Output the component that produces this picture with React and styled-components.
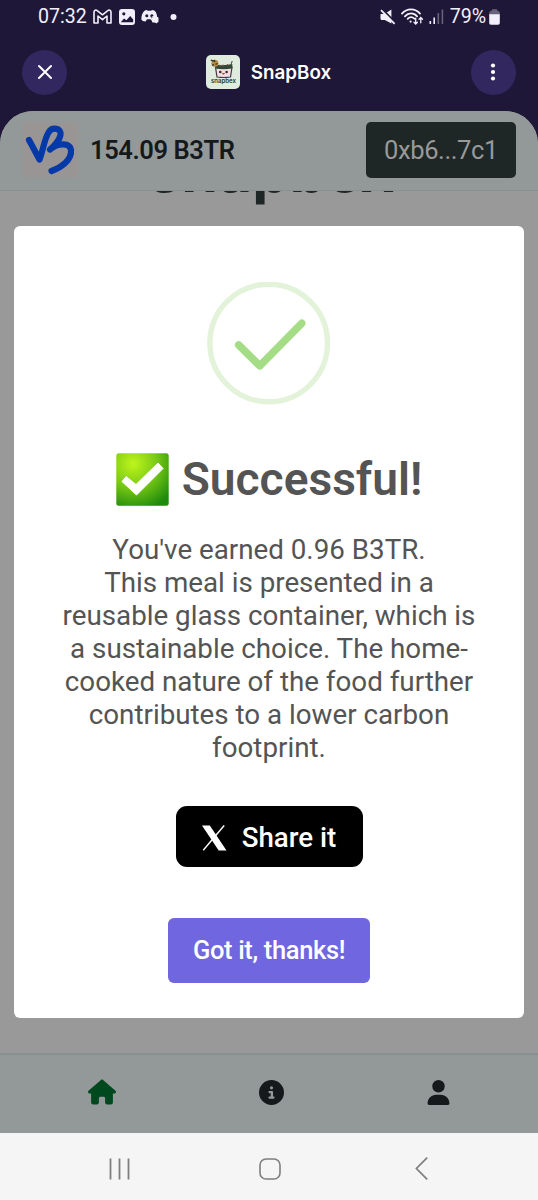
import React from 'react';
import styled, { createGlobalStyle } from 'styled-components';
import { FaHouse, FaCircleInfo, FaUser } from 'react-icons/fa6';

const GlobalStyle = createGlobalStyle`
  * {
    box-sizing: border-box;
  }

  body {
    margin: 0;
    font-family: Roboto, "Liberation Sans", sans-serif;
    background-color: #1e1738;
  }

  button {
    font-family: inherit;
    border: 0;
    cursor: pointer;
  }

  svg {
    display: block;
    flex-shrink: 0;
  }
`;

const Screen = styled.div`
  display: flex;
  flex-direction: column;
  width: 538px;
  height: 1200px;
  overflow: hidden;
  background-color: #1e1738;
`;

const StatusBar = styled.div`
  display: flex;
  justify-content: space-between;
  align-items: center;
  height: 33px;
  padding: 0 38px;
  color: #f3effa;
`;

const StatusGroup = styled.div`
  display: flex;
  align-items: center;
  gap: ${({ $gap }) => $gap};
`;

const StatusText = styled.span`
  font-size: 19.6px;
  line-height: 32px;
`;

const AppBar = styled.div`
  display: flex;
  justify-content: space-between;
  align-items: center;
  height: 78px;
  padding: 0 22px;
`;

const RoundButton = styled.button`
  display: flex;
  align-items: center;
  justify-content: center;
  width: 45px;
  height: 45px;
  padding: 0;
  border-radius: 50%;
  background-color: #32275f;
`;

const AppTitle = styled.div`
  display: flex;
  align-items: center;
  gap: 11px;
  padding-right: 1px;
  color: #fff;
  font-family: Inter, sans-serif;
  font-size: 18.8px;
  font-weight: 600;
`;

const WebView = styled.div`
  position: relative;
  display: flex;
  flex-direction: column;
  height: 1022px;
  overflow: hidden;
  border-radius: 33px 33px 0 0;
  background-color: #999;
`;

const Header = styled.header`
  display: flex;
  align-items: center;
  height: 80px;
  padding: 0 22px 1px;
  border-bottom: 1px solid #899090;
  background-color: #939998;
`;

const Balance = styled.div`
  flex: 1;
  padding-left: 12px;
  color: #15191c;
  font-size: 25.5px;
  font-weight: 600;
  letter-spacing: -0.42px;
`;

const Wallet = styled.button`
  width: 150px;
  height: 56px;
  padding: 0;
  border-radius: 5px;
  background-color: #1e2726;
  color: #999;
  font-size: 25.5px;
  letter-spacing: -0.4px;
`;

const Content = styled.main`
  flex: 1;
  overflow: hidden;
`;

const PageTitle = styled.h1`
  margin: -58px 0 0 5px;
  color: #1e2726;
  font-family: Inter, sans-serif;
  font-size: 59px;
  font-weight: 700;
  line-height: 76px;
  text-align: center;
`;

const TabBar = styled.nav`
  display: flex;
  justify-content: space-between;
  align-items: center;
  height: 80px;
  padding: 0 87px 4px 88px;
  border-top: 2px solid #899090;
  background-color: #939998;
`;

const Tab = styled.a`
  color: ${({ $active }) => ($active ? '#00481d' : '#15191c')};
`;

const Modal = styled.div`
  position: absolute;
  top: 115px;
  left: 14px;
  display: flex;
  flex-direction: column;
  align-items: center;
  width: 510px;
  height: 792px;
  padding-top: 56px;
  border-radius: 6px;
  background-color: #fff;
`;

const ModalTitle = styled.h2`
  display: flex;
  align-items: center;
  gap: 13px;
  height: 56px;
  margin: 45px 0 0;
  color: #545454;
  font-size: 46.1px;
  font-weight: 600;
`;

const ModalText = styled.p`
  margin: 26px 0 0;
  color: #545454;
  font-size: 27.75px;
  line-height: 33px;
  text-align: center;
  white-space: nowrap;
`;

const ShareButton = styled.button`
  display: flex;
  align-items: center;
  justify-content: center;
  gap: 15px;
  width: 187px;
  height: 61px;
  margin-top: 42px;
  padding: 2px 0 0;
  border-radius: 11px;
  background-color: #000;
  color: #fff;
  font-size: 27.7px;
  font-weight: 500;
`;

const ConfirmButton = styled.button`
  width: 202px;
  height: 65px;
  margin-top: 51px;
  padding: 0 0 2px;
  border-radius: 6px;
  background-color: #7066e0;
  color: #fff;
  font-size: 25.5px;
  font-weight: 500;
  letter-spacing: -0.35px;
`;

const SystemNav = styled.div`
  display: flex;
  justify-content: space-between;
  align-items: center;
  height: 67px;
  padding: 4px 110px 0 109px;
  background-color: #f5f5f5;
`;

const GmailIcon = () => (
  <svg width="19" height="16" viewBox="0 0 19 16" fill="none" stroke="currentColor" strokeWidth="1.6" strokeLinejoin="round">
    <path d="M1 3.2C1 1 3 .6 4.2 1.6L9.5 5.8l5.3-4.2C16 .6 18 1 18 3.2V14h-4V7l-4.5 3.7L5 7v7H1z" />
  </svg>
);

const GalleryIcon = () => (
  <svg width="16" height="16" viewBox="0 0 16 16">
    <rect width="16" height="16" rx="3" fill="currentColor" />
    <circle cx="4.8" cy="4.8" r="1.6" fill="#1e1738" />
    <path d="M1.8 13.2 5 9.5l2.4 1.8 3.8-4.4 3 3.6v2.7z" fill="#1e1738" />
  </svg>
);

const DiscordIcon = () => (
  <svg width="18" height="15" viewBox="0 0 18 15">
    <path d="M5.2 1 7 1.7h2.6L11.8 1c2.8.7 4 3.2 4.4 7H11v4L9.4 10.3H6L4.6 12.5C2.4 12.4 1 11.7.4 10.5.3 6 2 2 5.2 1z" fill="currentColor" />
    <circle cx="5.8" cy="6.8" r="1.5" fill="#1e1738" />
    <path d="M9.300 7a1.600 1.600 0 0 1 3.200-.2L10.500 8v2z" fill="#1e1738" />
    <rect x="11" y="8" width="6.5" height="5.4" rx="1" fill="currentColor" />
    <path d="M13 13h3v1.6z" fill="currentColor" />
  </svg>
);

const DotIcon = () => (
  <svg width="11" height="6" viewBox="-4.5 0 11 6">
    <circle cx="3" cy="3" r="3" fill="currentColor" />
  </svg>
);

const MuteIcon = () => (
  <svg width="16" height="16" viewBox="0 0 16 16">
    <path d="M1 5h3.5L11.4.4v14.2L4.8 11H2C1 11 .5 10.4.5 9.5v-3C.5 5.6.6 5 1 5z" fill="currentColor" />
    <path d="M2 0 15.5 13.6" stroke="#1e1738" strokeWidth="2" />
    <path d="M1 1.2 14.6 14.8" stroke="currentColor" strokeWidth="1.8" />
  </svg>
);

const WifiIcon = () => (
  <svg width="23" height="17" viewBox="0 0 23 17" fill="none" stroke="currentColor" strokeWidth="1.8" strokeLinecap="round">
    <path d="M1 5.6C5.8-.1 14.2-.1 19 5.6" />
    <path d="M3.9 8.3c3.4-3.8 8.9-3.8 12.2 0" />
    <path d="M6.7 10.9c2-2.1 4.7-2.1 6.7-.2" />
    <circle cx="9.6" cy="13.6" r="1.1" fill="currentColor" stroke="none" />
    <path d="M14.7 10.2v5.6M13 14.3l1.7 1.7 1.7-1.7M19.8 14.8V9.6M18.1 11.2l1.7-1.7 1.7 1.7" strokeWidth="1.3" />
  </svg>
);

const SignalIcon = () => (
  <svg width="16" height="15" viewBox="0 0 16 15" fill="currentColor">
    <rect x="0.5" y="12" width="1.6" height="3" />
    <rect x="4.4" y="8.5" width="1.6" height="6.5" />
    <rect x="8.5" y="4" width="1.6" height="11" opacity=".35" />
    <rect x="12.6" y="0.5" width="1.6" height="14.5" opacity=".35" />
  </svg>
);

const BatteryIcon = () => (
  <svg width="11" height="16" viewBox="0 0 11 16" fill="currentColor">
    <path d="M2.7 2V1.2Q2.7.3 3.6.3h3.8q.9 0 .9.9V2H9q1.8 0 1.8 2v2H.2V4Q.2 2 2 2z" opacity=".35" />
    <path d="M.2 5.3h10.6V14q0 1.8-1.8 1.8H2Q.2 15.8.2 14z" />
  </svg>
);

const SnapBoxLogo = () => (
  <svg width="34" height="34" viewBox="0 0 34 34">
    <rect width="34" height="34" rx="5" fill="#dfebdc" />
    <path d="M9.5 12H26l-1.5 10q-7 1-13.500 0z" fill="#f1dfe1" stroke="#423d40" strokeWidth="1.2" />
    <path d="M9.3 9.5q8.500 1.500 17-.5v4.500q-9 1.500-17 0z" fill="#314a37" />
    <path d="M13 9.8l1.500 1.400M17 9.500l1 1.700M21.300 9.200l1 1.500" stroke="#a5453e" />
    <circle cx="8.9" cy="8.3" r="3.5" fill="#b98b43" />
    <path d="M4.8 5.2l3 1M6 10.5l2-1M8 5l1 2M11.5 8.5l-2 .8" stroke="#35352c" strokeWidth="1.3" />
    <path d="M25 9.5 26.2 6" stroke="#48434a" strokeWidth="1" />
    <circle cx="14.3" cy="17" r="1.3" fill="#302b2e" />
    <circle cx="20.6" cy="17" r="1.3" fill="#302b2e" />
    <path d="M16 18q1.500 3 3 0z" fill="#9c3d42" />
    <text x="17.5" y="28" textAnchor="middle" textLength="25" lengthAdjust="spacingAndGlyphs" fontFamily="Inter, sans-serif" fontSize="6.2" fontWeight="600" fill="#263c31">snapbex</text>
  </svg>
);

const TokenLogo = () => (
  <svg width="56" height="56" viewBox="0 0 56 56">
    <rect x="0.5" y="0.5" width="55" height="55" fill="#989594" />
    <path
      d="M7 18 17.5 37.5C21 29 22 18 26.5 10.5C30 4.5 40 6 38.5 13C37 20 31 25 28 27.5C36 20.5 48 20.5 49 28C50 38 39 45.5 29.5 49"
      fill="none"
      stroke="#0639a8"
      strokeWidth="6.2"
      strokeLinecap="round"
      strokeLinejoin="round"
    />
  </svg>
);

const SuccessIcon = () => (
  <svg width="124" height="124" viewBox="0 0 124 124" fill="none">
    <circle cx="61.7" cy="61" r="58.8" stroke="#e3f3da" strokeWidth="5.4" />
    <path d="M31.7 63 52.8 83.8 94.7 41.3" stroke="#a5dc86" strokeWidth="7.6" strokeLinecap="round" strokeLinejoin="round" />
  </svg>
);

const CheckBoxIcon = () => (
  <svg width="53" height="53" viewBox="0 0 53 53">
    <defs>
      <radialGradient id="boxFill" cx="0.32" cy="0.2" r="0.9">
        <stop offset="0" stopColor="#c0f51c" />
        <stop offset="0.5" stopColor="#79c916" />
        <stop offset="1" stopColor="#1f8a0c" />
      </radialGradient>
    </defs>
    <rect x="0.3" y="0.3" width="52.4" height="52.4" rx="2.5" fill="url(#boxFill)" />
    <path d="M6 28.5 10.2 23.6 20 31.5 42 10 47 15.5 20.5 42z" fill="#fff" stroke="#fff" strokeLinejoin="round" />
  </svg>
);

const XLogo = () => (
  <svg width="25" height="26" viewBox="0 0 25 26" fill="#fff">
    <path d="M0 .5h7.8L24.5 25.500h-7.800z" />
    <path d="M22.2.5 1.200 25.300" stroke="#fff" strokeWidth="1.4" />
  </svg>
);

function App() {
  return (
    <>
      <GlobalStyle />
      <Screen>
        <StatusBar>
          <StatusGroup $gap="6.5px">
            <StatusText>07:32</StatusText>
            <GmailIcon />
            <GalleryIcon />
            <DiscordIcon />
            <DotIcon />
          </StatusGroup>
          <StatusGroup $gap="5px">
            <MuteIcon />
            <WifiIcon />
            <SignalIcon />
            <StatusGroup $gap="3px">
              <StatusText>79%</StatusText>
              <BatteryIcon />
            </StatusGroup>
          </StatusGroup>
        </StatusBar>

        <AppBar>
          <RoundButton aria-label="Close">
            <svg width="16" height="16" viewBox="0 0 16 16" fill="none" stroke="#fff" strokeWidth="2" strokeLinecap="round">
              <path d="M2 2l12 12M14 2 2 14" />
            </svg>
          </RoundButton>
          <AppTitle>
            <SnapBoxLogo />
            SnapBox
          </AppTitle>
          <RoundButton aria-label="More">
            <svg width="6" height="20" viewBox="0 0 6 20" fill="#fff">
              <circle cx="3" cy="3.5" r="2.1" />
              <circle cx="3" cy="10" r="2.1" />
              <circle cx="3" cy="16.5" r="2.1" />
            </svg>
          </RoundButton>
        </AppBar>

        <WebView>
          <Header>
            <TokenLogo />
            <Balance>154.09 B3TR</Balance>
            <Wallet>0xb6...7c1</Wallet>
          </Header>

          <Content>
            <PageTitle>snapbex</PageTitle>
          </Content>

          <TabBar>
            <Tab $active><FaHouse size={28} /></Tab>
            <Tab><FaCircleInfo size={25} /></Tab>
            <Tab><FaUser size={25} /></Tab>
          </TabBar>

          <Modal>
            <SuccessIcon />
            <ModalTitle>
              <CheckBoxIcon />
              Successful!
            </ModalTitle>
            <ModalText>
              You've earned 0.96 B3TR.<br />
              This meal is presented in a<br />
              reusable glass container, which is<br />
              a sustainable choice. The home-<br />
              cooked nature of the food further<br />
              contributes to a lower carbon<br />
              footprint.
            </ModalText>
            <ShareButton>
              <XLogo />
              Share it
            </ShareButton>
            <ConfirmButton>Got it, thanks!</ConfirmButton>
          </Modal>
        </WebView>

        <SystemNav>
          <svg width="21" height="22" viewBox="0 0 21 22" stroke="#7e7e7e" strokeWidth="1.8">
            <path d="M1.5.5v21M10.5.5v21M19.5.5v21" />
          </svg>
          <svg width="22" height="22" viewBox="0 0 22 22" fill="none" stroke="#7e7e7e" strokeWidth="1.6">
            <rect x="1" y="1" width="20" height="20" rx="6" />
          </svg>
          <svg width="18" height="23" viewBox="-5 0 18 23" fill="none" stroke="#7e7e7e" strokeWidth="1.7">
            <path d="M12.2.7 1.4 11.5 12.2 22.3" />
          </svg>
        </SystemNav>
      </Screen>
    </>
  );
}

export default App;
